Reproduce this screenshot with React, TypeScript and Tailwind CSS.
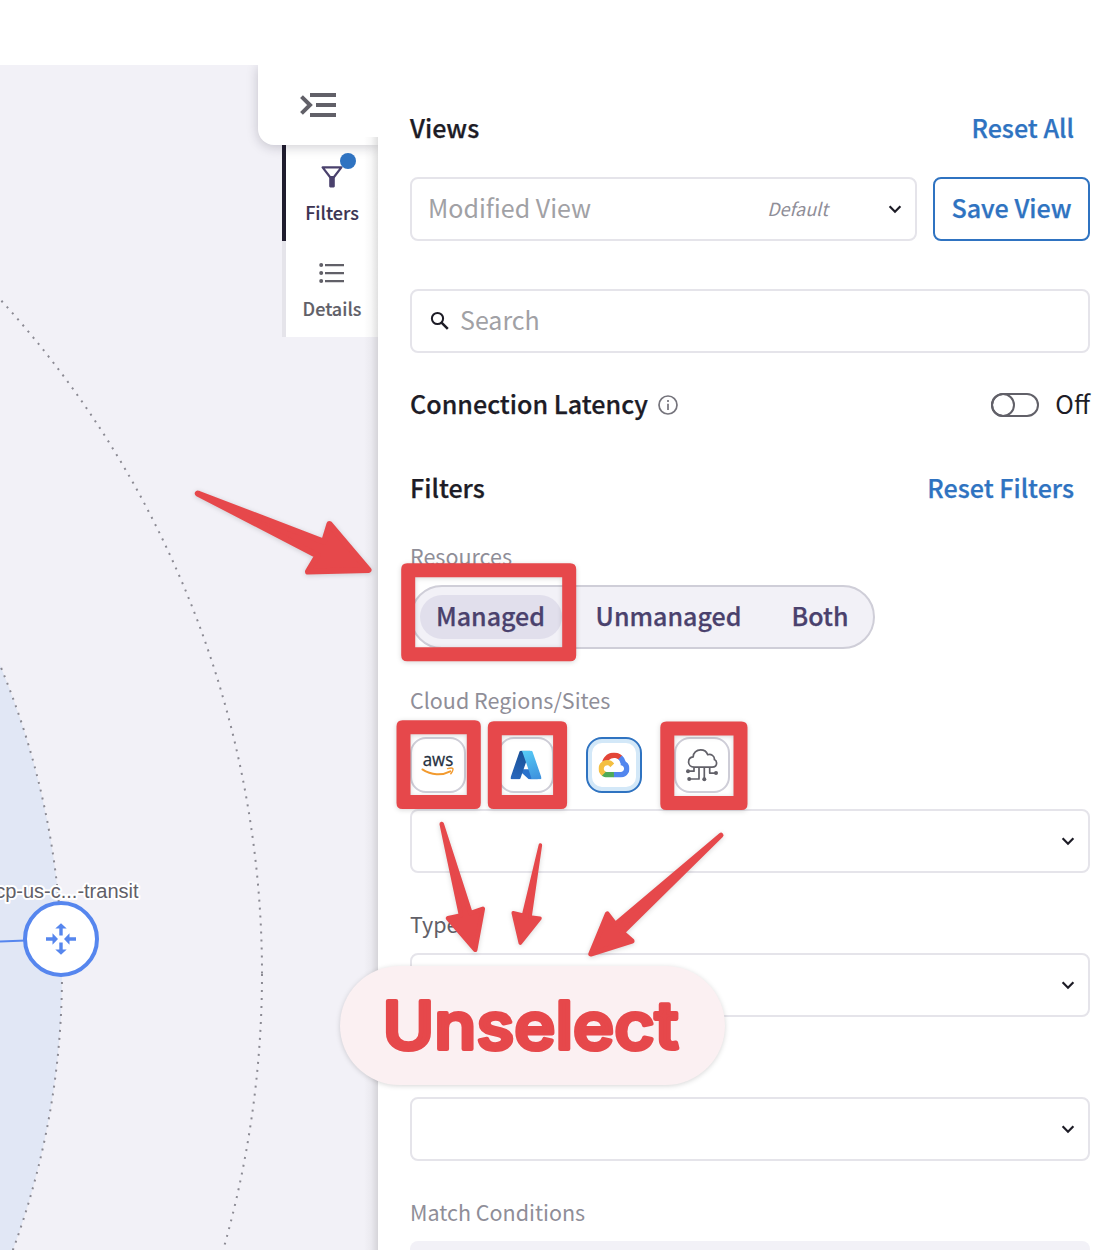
import React from "react";

const RED = "#e6484b";

function Chevron() {
  return (
    <svg width="14" height="10" viewBox="0 0 14 10" fill="none" stroke="#1d1c26" strokeWidth="2.2">
      <path d="M1.6 2.3 7 7.7l5.4-5.4" />
    </svg>
  );
}

function SelectBox({ className = "" }: { className?: string }) {
  return (
    <div
      className={`flex h-16 items-center justify-end rounded-lg border-2 border-[#e5e4ea] bg-white pr-[13px] ${className}`}
    >
      <Chevron />
    </div>
  );
}

function FieldLabel({ children, className = "" }: { children: React.ReactNode; className?: string }) {
  return (
    <div className={`flex h-8 items-center text-[21.5px] leading-8 text-[#8f8e98] ${className}`}>
      <span className="-translate-y-px">{children}</span>
    </div>
  );
}

function Topology() {
  return (
    <svg className="absolute inset-0" width="378" height="1185" viewBox="0 65 378 1185">
      <circle cx="-738" cy="974" r="800" fill="#e1e7f5" stroke="#8b8a93" strokeWidth="2" strokeDasharray="2 6" />
      <circle cx="-738" cy="974" r="1000" fill="none" stroke="#8b8a93" strokeWidth="2" strokeDasharray="2 6" />
      <path d="M0 941.5 26 940.5" stroke="#5686ee" strokeWidth="2" />
      <circle cx="61" cy="939" r="36" fill="#fff" stroke="#5686ee" strokeWidth="4" />
      <g fill="#5686ee">
        <path d="M59.3 935.500v-7h-4l5.700-5.200 5.700 5.200h-4v7z" />
        <path d="M59.300 942.500v7h-4l5.700 5.200 5.700-5.200h-4v-7z" />
        <path d="M46 937.300h6.500v-4l5.500 5.700-5.500 5.700v-4H46z" />
        <path d="M76 937.300h-6.500v-4l-5.500 5.700 5.500 5.700v-4H76z" />
      </g>
      <text
        x="138.5"
        y="898"
        textAnchor="end"
        fontFamily="Liberation Sans, sans-serif"
        fontSize="20"
        fill="#616068"
        stroke="#fff"
        strokeWidth="4"
        strokeLinejoin="round"
        paintOrder="stroke"
      >
        cp-us-c...-transit
      </text>
    </svg>
  );
}

function AwsLogo() {
  return (
    <svg className="overflow-visible" width="34" height="28" viewBox="0 0 34 28">
      <text x="1.7" y="14.7" fontFamily="Open Sans, sans-serif" fontWeight="500" fontSize="18.8" fill="#252f3e" stroke="#252f3e" strokeWidth="0.3" textLength="30.500" lengthAdjust="spacingAndGlyphs">
        aws
      </text>
      <path d="M1.4 18.4C10.5 24.6 21 24.6 29.3 20.3" fill="none" stroke="#f29a2e" strokeWidth="1.9" strokeLinecap="round" />
      <path d="M26.6 17.6c2.4-.7 4.6-.8 5.2-.1.5.9-.5 3.6-2 5.2" fill="none" stroke="#f29a2e" strokeWidth="1.5" strokeLinecap="round" />
    </svg>
  );
}

function AzureLogo() {
  return (
    <svg className="-translate-x-[0.5px] -translate-y-[0.5px]" width="31" height="29" viewBox="4 6 88 84" preserveAspectRatio="none">
      <defs>
        <linearGradient id="azA" x1="58.97" y1="7.41" x2="20" y2="92" gradientUnits="userSpaceOnUse">
          <stop offset="0" stopColor="#174d92" />
          <stop offset="1" stopColor="#2968bd" />
        </linearGradient>
        <linearGradient id="azB" x1="46" y1="10" x2="76" y2="88" gradientUnits="userSpaceOnUse">
          <stop offset="0" stopColor="#55c8f5" />
          <stop offset="1" stopColor="#3f93de" />
        </linearGradient>
      </defs>
      <path fill="#2a72cc" d="M71.175 60.261h-41.29a1.911 1.911 0 0 0-1.305 3.309l26.532 24.764a4.171 4.171 0 0 0 2.846 1.121h23.38z" />
      <path fill="url(#azA)" d="M33.338 6.544h26.038l-27.03 80.087a4.152 4.152 0 0 1-3.933 2.824H8.149a4.145 4.145 0 0 1-3.928-5.47L29.404 9.368a4.152 4.152 0 0 1 3.934-2.825z" />
      <path fill="url(#azB)" d="M66.595 9.364a4.145 4.145 0 0 0-3.928-2.82H33.648a4.146 4.146 0 0 1 3.928 2.82l25.184 74.62a4.146 4.146 0 0 1-3.928 5.472h29.02a4.146 4.146 0 0 0 3.927-5.472z" />
    </svg>
  );
}

function GcpLogo() {
  return (
    <svg className="-translate-x-[0.5px] -translate-y-[0.5px]" width="31" height="25" viewBox="0 0 256 206">
      <path fill="#e34537" d="M170.252 56.819l22.253-22.253 1.483-9.37C153.437-11.677 88.976-7.496 52.42 33.92 42.267 45.423 34.734 59.764 30.717 74.573l7.97-1.123 44.505-7.34 3.436-3.513c19.797-21.742 53.27-24.667 76.128-6.168l7.496.39z" />
      <path fill="#5286ee" d="M224.205 73.918a100.249 100.249 0 0 0-30.217-48.722l-31.232 31.232a55.515 55.515 0 0 1 20.379 44.037v5.544c15.351 0 27.797 12.445 27.797 27.796 0 15.352-12.446 27.485-27.797 27.485h-55.671l-5.466 5.934v33.34l5.466 5.231h55.67c39.93.311 72.553-31.494 72.864-71.424a72.303 72.303 0 0 0-31.793-60.453" />
      <path fill="#4faa57" d="M71.87 205.796h55.593V161.29H71.87a27.275 27.275 0 0 1-11.4-2.498l-7.887 2.42-22.409 22.253-1.952 7.574c12.567 9.489 27.9 14.825 43.647 14.757" />
      <path fill="#f4bf41" d="M71.87 61.426C31.94 61.664-.237 94.228.001 134.158a72.301 72.301 0 0 0 28.222 56.88l32.248-32.246c-13.99-6.322-20.208-22.786-13.887-36.776 6.32-13.99 22.786-20.208 36.775-13.888a27.796 27.796 0 0 1 13.887 13.888l32.248-32.248A72.224 72.224 0 0 0 71.87 61.426" />
    </svg>
  );
}

function SiteLogo() {
  return (
    <svg width="34" height="34" viewBox="685 748 34 34" fill="none" stroke="#616068" strokeWidth="1.7" strokeLinejoin="round">
      <path d="M694.2 767.2c-3.4 0-5.6-2.3-5.6-5.2 0-2.8 2-4.8 4.6-5.1-.1-4 3.3-7 7.4-7 3.5 0 6.1 1.9 7.1 4.8 3.3-1.1 7.1 1.3 6.7 4.9 1.4.7 2.2 1.9 2.2 3.5 0 2.4-1.9 4.1-4.5 4.1z" />
      <path d="M694 767.2v4h-6M699 767.2v11.8h-10M704.3 767.2v12M709.7 767.2v5.9h6.5" />
      <g fill="#616068" stroke="none">
        <circle cx="688" cy="771.2" r="2" />
        <circle cx="689.2" cy="779.1" r="2" />
        <circle cx="704.3" cy="779.2" r="2" />
        <circle cx="716" cy="773.1" r="2" />
      </g>
    </svg>
  );
}

function CloudButton({ children }: { children: React.ReactNode }) {
  return (
    <button className="flex size-14 items-center justify-center rounded-2xl border-2 border-[#cfced8] bg-white">
      {children}
    </button>
  );
}

function NavRail() {
  return (
    <div className="relative ml-auto w-[120px]">
      <button className="relative flex h-20 w-[120px] items-center justify-center rounded-bl-2xl bg-white shadow-[0_2px_12px_rgba(30,28,50,0.22)]">
        <svg width="36" height="24" viewBox="0 0 36 24" fill="#616068">
          <path d="M10 0h26v4H10zM16 10h20v4H16zM10 20h26v4H10z" />
          <path d="M1.5 3.6 10 12l-8.5 8.4" fill="none" stroke="#616068" strokeWidth="4" />
        </svg>
      </button>
      <div className="ml-6 flex flex-col">
        <div className="flex h-24 flex-col items-center border-l-4 border-[#1f1c2e] bg-white pt-5 text-[#3b3352]">
          <div className="relative">
            <svg width="24" height="24" viewBox="0 0 24 24" fill="none" stroke="#4a416d" strokeWidth="2.2" strokeLinejoin="round">
              <path d="M2.6 2.4h18.800L14 12h-4z" />
              <path d="M10.300 12h3.400v9.300h-3.400z" fill="#4a416d" />
            </svg>
            <span className="absolute -top-3 left-5 size-4 rounded-full bg-[#2f73c1]" />
          </div>
          <span className="mt-[9px] text-[18px] leading-7 font-medium [-webkit-text-stroke:0.15px]">Filters</span>
        </div>
        <div className="flex h-24 flex-col items-center border-l-4 border-[#e5e4ea] bg-white pt-5 text-[#616068]">
          <svg width="26" height="24" viewBox="0 0 26 24" fill="#616068">
            <path d="M6 3h19v2.200H6zM6 11h19v2.200H6zM6 19h19v2.200H6z" />
            <circle cx="2.2" cy="4.1" r="2" />
            <circle cx="2.2" cy="12.1" r="2" />
            <circle cx="2.2" cy="20.1" r="2" />
          </svg>
          <span className="mt-[9px] text-[18px] leading-7 font-medium [-webkit-text-stroke:0.15px]">Details</span>
        </div>
      </div>
    </div>
  );
}

function Annotations() {
  const boxes = [
    [408.2, 570.2, 161, 84],
    [403.5, 727.3, 70.3, 74.7],
    [494.8, 728.3, 65.3, 73.7],
    [667.3, 728.5, 73.2, 74.5],
  ];
  return (
    <svg className="pointer-events-none absolute inset-0" width="1098" height="1250" viewBox="0 0 1098 1250">
      <g style={{ filter: "drop-shadow(0 1.5px 2.5px rgba(0,0,0,.16))" }}>
        {boxes.map(([x, y, w, h]) => (
          <path
            key={x}
            fill={RED}
            fillRule="evenodd"
            d={`M${x - 1} ${y - 7}h${w + 2}q6 0 6 6v${h + 2}q0 6-6 6h${-(w + 2)}q-6 0-6-6v${-(h + 2)}q0-6 6-6zM${x + 7} ${y + 7}v${h - 14}h${w - 14}v${-(h - 14)}z`}
          />
        ))}
        <g fill={RED} stroke={RED} strokeLinejoin="round">
          <path strokeWidth="6" d="M197.8 493.5 324 541.8 329.5 524 368.5 570 308 571.6 317.5 555.5z" />
          <path strokeWidth="4.5" d="M441.7 824 470.5 913.2 482.8 908.8 475.2 949.8 448 918.2 461 915.4z" />
          <path strokeWidth="3.5" d="M540.4 845 530 917 540 918.3 520.3 943.2 513.2 912.8 523.5 915.3z" />
          <path strokeWidth="5" d="M721 835.2 615.3 924.4 607.3 914 590.8 954 632 941 622.3 932.5z" />
        </g>
      </g>
      <rect x="340" y="966" width="385" height="119" rx="59.5" fill="#fbf0f2" style={{ filter: "drop-shadow(0 1.5px 2.5px rgba(0,0,0,.16))" }} />
      <text
        x="382.5"
        y="1049.3"
        fontFamily="Inter, sans-serif"
        fontWeight="500"
        fontSize="66"
        fill={RED}
        stroke={RED}
        strokeWidth="4.2"
        strokeLinejoin="round"
        textLength="296"
        lengthAdjust="spacingAndGlyphs"
      >
        Unselect
      </text>
    </svg>
  );
}

export default function App() {
  return (
    <div className="relative flex h-[1250px] w-[1098px] flex-col overflow-hidden bg-white font-['Noto_Sans_CJK_SC',sans-serif] text-[#1d1c26]">
      <header className="h-[65px] shrink-0 bg-white" />
      <main className="flex min-h-0 flex-1">
        <section className="relative w-[378px] shrink-0 overflow-hidden bg-[#f2f1f7]">
          <Topology />
          <NavRail />
          <div className="absolute top-[72px] right-0 bottom-0 w-3.5 bg-linear-to-l from-black/12 via-black/3 to-transparent" />
        </section>
        <aside className="flex w-[720px] flex-col pt-10 pr-2 pl-8">
          <div className="flex h-12 shrink-0 items-center justify-between pr-4 text-[25.1px] leading-[46px] font-medium [-webkit-text-stroke:0.25px]">
            <h2 className="-translate-y-0.5">Views</h2>
            <a className="-translate-y-0.5 text-[#2f73c1]">Reset All</a>
          </div>
          <div className="mt-6 flex h-16 shrink-0 gap-4">
            <div className="flex w-[507px] items-center rounded-lg border-2 border-[#e5e4ea] pr-[13px] pl-4">
              <span className="-translate-y-px text-[25px] text-[#a1a1a5]">Modified View</span>
              <span className="mr-[60px] ml-auto -translate-y-px text-[18px] text-[#8f8e98] italic">Default</span>
              <Chevron />
            </div>
            <button className="flex flex-1 items-center justify-center rounded-lg border-2 border-[#2f73c1] text-[25.1px] font-medium whitespace-nowrap text-[#2f73c1] [-webkit-text-stroke:0.25px]">
              <span className="-translate-y-px">Save View</span>
            </button>
          </div>
          <div className="mt-12 flex h-16 shrink-0 items-center rounded-lg border-2 border-[#e5e4ea] pl-[18px]">
            <svg className="-translate-y-[0.5px]" width="19" height="19" viewBox="0 0 19 19" fill="none" stroke="#1d1c26" strokeWidth="2">
              <circle cx="7.5" cy="7" r="5.6" />
              <path d="m11.3 10.8 6.5 6.6" strokeWidth="2.5" />
            </svg>
            <span className="ml-[11px] -translate-y-px text-[25px] text-[#a1a1a5]">Search</span>
          </div>
          <div className="mt-7 flex h-12 shrink-0 items-center">
            <h2 className="-translate-y-px text-[25.1px] font-medium [-webkit-text-stroke:0.25px]">Connection Latency</h2>
            <svg className="ml-2.5" width="20" height="20" viewBox="0 0 20 20" fill="none" stroke="#75747c" strokeWidth="1.7">
              <circle cx="10" cy="10" r="9" />
              <path d="M10 8.8V15M10 5v2" />
            </svg>
            <div className="ml-auto flex h-6 w-12 rounded-full border-2 border-[#616068]">
              <div className="-mt-0.5 -ml-0.5 size-6 rounded-full border-2 border-[#616068]" />
            </div>
            <span className="ml-4 -translate-y-px text-[25px]">Off</span>
          </div>
          <div className="mt-9 flex h-12 shrink-0 items-center justify-between pr-4 text-[25.1px] leading-[46px] font-medium [-webkit-text-stroke:0.25px]">
            <h2 className="-translate-y-0.5">Filters</h2>
            <a className="-translate-y-0.5 text-[#2f73c1]">Reset Filters</a>
          </div>
          <FieldLabel className="mt-7">Resources</FieldLabel>
          <div className="mt-3 flex h-16 w-[465px] shrink-0 items-center rounded-full border-2 border-[#cfced8] bg-[#f2f1f7] px-2 text-[25px] leading-[42px] font-medium text-[#4a416d] [-webkit-text-stroke:0.25px]">
            <button className="h-11 w-[142px] rounded-full bg-[#e1dfec]">
              <span className="block -translate-x-[0.5px] -translate-y-0.5">Managed</span>
            </button>
            <button className="h-11 w-[213px]">
              <span className="block -translate-y-0.5">Unmanaged</span>
            </button>
            <button className="h-11 w-[90px]">
              <span className="block -translate-y-0.5">Both</span>
            </button>
          </div>
          <FieldLabel className="mt-9">Cloud Regions/Sites</FieldLabel>
          <div className="mt-5 flex h-14 shrink-0 gap-8">
            <CloudButton><AwsLogo /></CloudButton>
            <CloudButton><AzureLogo /></CloudButton>
            <button className="flex size-14 items-center justify-center rounded-2xl border-2 border-[#2f73c1] bg-white shadow-[inset_0_0_0_4px_#d3e8f8]">
              <GcpLogo />
            </button>
            <CloudButton><SiteLogo /></CloudButton>
          </div>
          <SelectBox className="mt-4 shrink-0" />
          <FieldLabel className="mt-9 text-[#616068]!">Type</FieldLabel>
          <SelectBox className="mt-3 shrink-0" />
          <div className="mt-9 h-8 shrink-0" />
          <SelectBox className="mt-3 shrink-0" />
          <FieldLabel className="mt-9">Match Conditions</FieldLabel>
          <div className="mt-3 h-16 shrink-0 rounded-lg bg-[#f2f1f7]" />
        </aside>
      </main>
      <Annotations />
    </div>
  );
}
